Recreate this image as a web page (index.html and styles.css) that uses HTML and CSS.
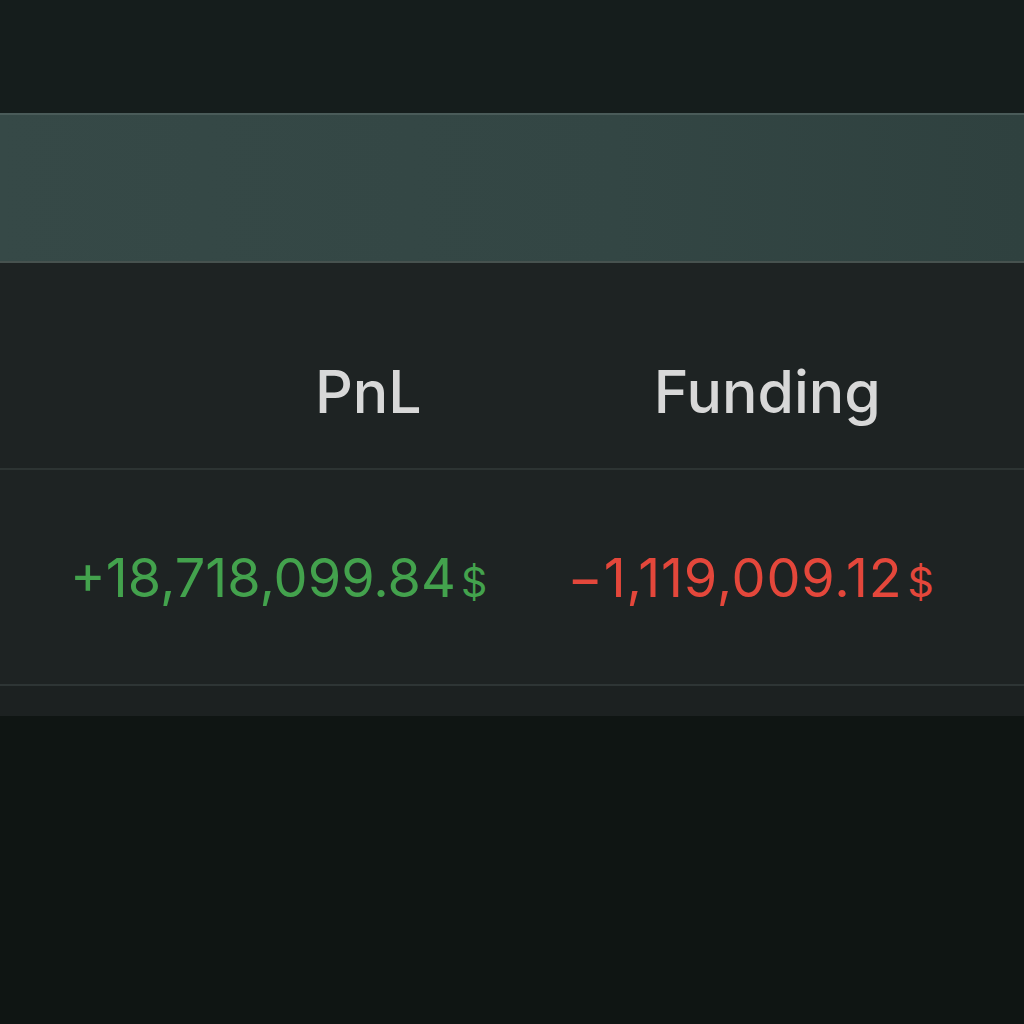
FILE: index.html
```html
<!DOCTYPE html>
<html>
<head>
<meta charset="utf-8">
<link rel="stylesheet" href="styles.css">
</head>
<body>
<div class="page">
  <div class="topbar"></div>
  <div class="band"></div>
  <div class="table">
    <div class="row head">
      <div class="cell">PnL</div>
      <div class="cell">Funding</div>
    </div>
    <div class="row values">
      <div class="cell pos">+18,718,099.84<span class="cur">$</span></div>
      <div class="cell neg">−1,119,009.12<span class="cur">$</span></div>
    </div>
    <div class="foot"></div>
  </div>
  <div class="bottom"></div>
</div>
</body>
</html>
```
FILE: styles.css
```css
html, body {
  margin: 0;
  padding: 0;
  background: #0f1513;
}
.page {
  width: 1024px;
  height: 1024px;
  display: flex;
  flex-direction: column;
  font-family: Inter, "Noto Sans", sans-serif;
  overflow: hidden;
}
.topbar {
  height: 113px;
  background: #151d1c;
}
.band {
  height: 146px;
  background: linear-gradient(90deg, #364947 0%, #334644 60%, #2f413f 100%);
  border-top: 2px solid #4a5b59;
  border-bottom: 2px solid #47524f;
}
.table {
  background: #1e2323;
}
.row {
  display: flex;
}
.head {
  height: 207px;
  box-sizing: border-box;
  padding: 99px 0 0 315px;
  gap: 232px;
  border-bottom: 2px solid #2d3433;
  font-size: 59px;
  line-height: 59px;
  color: #d8d8d8;
  font-weight: 500;
}
.values {
  height: 216px;
  box-sizing: border-box;
  padding: 81px 0 0 70px;
  gap: 80px;
  border-bottom: 2px solid #2e3535;
  font-size: 54px;
  line-height: 54px;
}
.pos { color: #43a24d; }
.neg { color: #e4473b; letter-spacing: 0.8px; }
.cur {
  font-size: 41px;
  margin-left: 5px;
  letter-spacing: 0;
}
.foot {
  height: 30px;
  background: #1c2121;
}
.bottom {
  flex: 1;
  background: #0f1513;
}
```
